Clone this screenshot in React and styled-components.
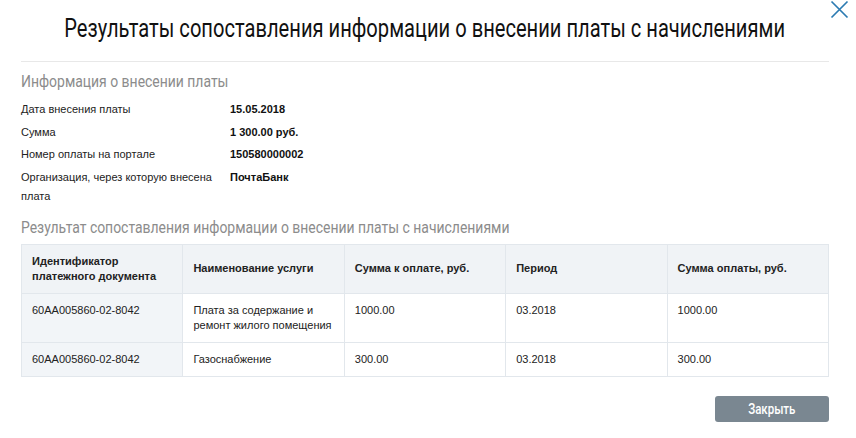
import styled, { createGlobalStyle } from 'styled-components';

const GlobalStyle = createGlobalStyle`
  html, body {
    margin: 0;
    padding: 0;
    background: #fff;
  }
  body {
    font-family: "Liberation Sans", Arial, sans-serif;
    color: #1f1f1f;
  }
`;

const payment = [
  { label: 'Дата внесения платы', value: '15.05.2018' },
  { label: 'Сумма', value: '1 300.00 руб.' },
  { label: 'Номер оплаты на портале', value: '150580000002' },
  { label: 'Организация, через которую внесена плата', value: 'ПочтаБанк' },
];

const columns = [
  'Идентификатор платежного документа',
  'Наименование услуги',
  'Сумма к оплате, руб.',
  'Период',
  'Сумма оплаты, руб.',
];

const rows = [
  ['60AA005860-02-8042', 'Плата за содержание и ремонт жилого помещения', '1000.00', '03.2018', '1000.00'],
  ['60AA005860-02-8042', 'Газоснабжение', '300.00', '03.2018', '300.00'],
];

function App() {
  return (
    <>
      <GlobalStyle />
      <Modal>
        <CloseButton aria-label="Закрыть">
          <svg width="19" height="19" viewBox="0 0 19 19">
            <path d="M1.5 1.5 L17.5 17.5 M17.5 1.5 L1.5 17.5" stroke="#2b7bb2" strokeWidth="1.7" fill="none" />
          </svg>
        </CloseButton>
        <Header>
          <Title>
            <Narrow $origin="center" $scale={0.805}>
              Результаты сопоставления информации о внесении платы с начислениями
            </Narrow>
          </Title>
        </Header>

        <SectionTitle>
          <Narrow>Информация о внесении платы</Narrow>
        </SectionTitle>
        <InfoList>
          {payment.map((p) => (
            <InfoRow key={p.label}>
              <Label>{p.label}</Label>
              <Value>{p.value}</Value>
            </InfoRow>
          ))}
        </InfoList>

        <SectionTitle $second>
          <Narrow>Результат сопоставления информации о внесении платы с начислениями</Narrow>
        </SectionTitle>
        <Table>
          <thead>
            <tr>
              {columns.map((c, i) => (
                <Th key={c} $first={i === 0}>{c}</Th>
              ))}
            </tr>
          </thead>
          <tbody>
            {rows.map((r, ri) => (
              <tr key={ri}>
                {r.map((cell, i) => (
                  <Td key={i} $first={i === 0}>{cell}</Td>
                ))}
              </tr>
            ))}
          </tbody>
        </Table>

        <Footer>
          <Button>
            <Narrow $origin="center">Закрыть</Narrow>
          </Button>
        </Footer>
      </Modal>
    </>
  );
}

export default App;

const Modal = styled.div`
  position: relative;
  width: 856px;
  height: 438px;
  box-sizing: border-box;
  padding: 0 27px 0 21px;
  background: #fff;
  overflow: hidden;
`;

const CloseButton = styled.button`
  position: absolute;
  top: 0;
  right: 7px;
  padding: 0;
  border: 0;
  background: none;
  cursor: pointer;
  line-height: 0;
`;

// no condensed face installed, so the Roboto glyphs are narrowed
const Narrow = styled.span`
  display: inline-block;
  white-space: nowrap;
  transform: scaleX(${(p) => p.$scale || 0.82});
  transform-origin: ${(p) => p.$origin || 'left'} center;
`;

const Header = styled.div`
  padding: 14px 0 17px;
  border-bottom: 1px solid #e8e8e8;
`;

const Title = styled.h1`
  display: flex;
  justify-content: center;
  margin: 0 -21px 0 -21px;
  font-family: Roboto, "Liberation Sans", sans-serif;
  font-weight: 400;
  font-size: 25px;
  line-height: 30px;
  color: #111;
`;

const SectionTitle = styled.h2`
  margin: ${(p) => (p.$second ? '9px 0 6px' : '8px 0 8px')};
  font-family: Roboto, "Liberation Sans", sans-serif;
  font-weight: 400;
  font-size: 17px;
  line-height: 22px;
  color: #8c8c8c;
`;

const InfoList = styled.div`
  display: flex;
  flex-direction: column;
  gap: 3px;
`;

const InfoRow = styled.div`
  display: grid;
  grid-template-columns: 196px 1fr;
  column-gap: 13px;
  font-size: 11px;
  line-height: 19.5px;
`;

const Label = styled.div`
  color: #222;
`;

const Value = styled.div`
  font-weight: 700;
  color: #111;
`;

const Table = styled.table`
  width: 808px;
  border-collapse: collapse;
  table-layout: fixed;
  font-size: 11px;
  line-height: 15px;
  color: #222;
`;

const Th = styled.th`
  height: 49px;
  box-sizing: border-box;
  padding: 9px 10px;
  text-align: left;
  vertical-align: middle;
  font-weight: 700;
  background: #f0f3f6;
  border: 1px solid #e2e7ec;
`;

const Td = styled.td`
  padding: 9px 10px 9px;
  text-align: left;
  vertical-align: top;
  background: ${(p) => (p.$first ? '#f2f5f8' : '#fff')};
  border: 1px solid #e2e7ec;
`;

const Footer = styled.div`
  display: flex;
  justify-content: flex-end;
  margin-top: 19px;
`;

const Button = styled.button`
  width: 114px;
  height: 26px;
  padding: 0;
  border: 0;
  border-radius: 3px;
  background: #7a8791;
  color: #fff;
  font-family: Roboto, "Liberation Sans", sans-serif;
  font-size: 14px;
  font-weight: 500;
  cursor: pointer;
`;
